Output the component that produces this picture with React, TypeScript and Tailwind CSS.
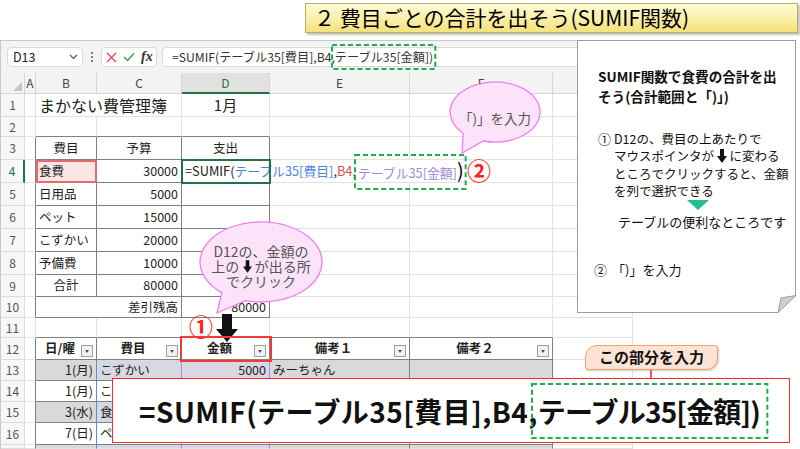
import React from 'react';

const font = "font-['Noto_Sans_CJK_JP','Noto_Sans',sans-serif]";

const R = {
  g: 'border-r-[#e2e2e2]',
  d: 'border-r-[#808080]',
  n: 'border-r-transparent',
  b: 'border-r-[#5b8bd9]',
  p: 'border-r-[#a48ed9]',
};
const B = {
  g: 'border-b-[#e2e2e2]',
  d: 'border-b-[#808080]',
};

const wA = 'w-[11px]';
const wB = 'w-[61px]';
const wC = 'w-[85px]';
const wD = 'w-[88px]';
const wE = 'w-[140px]';
const wF = 'w-[143px]';
const wG = 'w-[80px]';
const wBC = 'w-[146px]';

interface CellProps {
  w: string;
  r?: keyof typeof R;
  b?: keyof typeof B;
  className?: string;
  children?: React.ReactNode;
}

function Cell({ w, r = 'g', b = 'g', className = '', children }: CellProps) {
  return (
    <div
      className={`flex h-full shrink-0 items-center whitespace-nowrap border-r border-b px-[3px] ${w} ${R[r]} ${B[b]} ${className}`}
    >
      {children}
    </div>
  );
}

function Row({ h, n, active, children }: { h: string; n?: number; active?: boolean; children: React.ReactNode }) {
  return (
    <div className={`flex ${h}`}>
      <div
        className={`flex h-full w-[24px] shrink-0 items-center justify-center border-b border-r border-b-[#dcdcdc] bg-[#f7f7f7] text-[12px] ${
          active ? 'border-r-2 border-r-[#217346] text-[#217346]' : 'border-r-[#dcdcdc] text-[#555]'
        }`}
      >
        {n}
      </div>
      {children}
    </div>
  );
}

function FilterBtn() {
  return (
    <span className="mb-[2px] flex h-[12px] w-[12px] shrink-0 items-center justify-center self-end border border-[#9e9e9e] bg-[#f2f2f2]">
      <span className="h-0 w-0 border-x-[2.5px] border-t-[3px] border-x-transparent border-t-[#555]" />
    </span>
  );
}

function DashedBox({ className }: { className: string }) {
  return (
    <span className={`pointer-events-none absolute ${className}`}>
      <svg className="h-full w-full overflow-visible">
        <rect x="0" y="0" width="100%" height="100%" fill="none" stroke="#1fae4b" strokeWidth="2" strokeDasharray="5 3" />
      </svg>
    </span>
  );
}

function DownArrow({ className = '' }: { className?: string }) {
  return (
    <svg viewBox="0 0 10 14" className={`inline-block ${className}`}>
      <rect x="3" y="0" width="4" height="8" fill="#111" />
      <polygon points="0,7 10,7 5,14" fill="#111" />
    </svg>
  );
}

function FormulaBar() {
  return (
    <div className="flex h-[33px] items-start border-t border-[#c8c8c8] bg-[#f3f3f3] pl-[6px] pt-[6px]">
      <div className="flex h-[20px] w-[76px] items-center justify-between rounded-[4px] border border-[#dadada] bg-white pl-[5px] pr-[4px] text-[12.5px] text-[#222]">
        D13
        <svg width="9" height="6" viewBox="0 0 9 6">
          <path d="M1 1l3.5 3.5L8 1" fill="none" stroke="#555" strokeWidth="1.2" />
        </svg>
      </div>
      <div className="ml-[7px] flex h-[20px] w-[4px] flex-col items-center justify-center gap-[2px]">
        <span className="h-[2px] w-[2px] rounded-full bg-[#555]" />
        <span className="h-[2px] w-[2px] rounded-full bg-[#555]" />
        <span className="h-[2px] w-[2px] rounded-full bg-[#555]" />
      </div>
      <div className="ml-[7px] flex h-[20px] w-[56px] items-center gap-[6px] rounded-[4px] border border-[#dadada] bg-white pl-[4px]">
        <svg width="11" height="11" viewBox="0 0 11 11">
          <path d="M1 1l9 9M10 1l-9 9" stroke="#e5484d" strokeWidth="1.3" />
        </svg>
        <svg width="12" height="10" viewBox="0 0 12 10">
          <path d="M1 5l3.5 3.5L11 1.5" fill="none" stroke="#3c9a5f" strokeWidth="1.4" />
        </svg>
        <span className="font-['Liberation_Serif',serif] text-[14px] font-bold italic leading-none text-[#333]">fx</span>
      </div>
      <div className="ml-[5px] flex h-[20px] flex-1 items-center rounded-l-[4px] border border-[#dadada] bg-white pl-[9px] text-[12.2px] text-[#333]">
        =SUMIF(テーブル35[費目],B4,
        <span className="relative leading-[18px]">
          テーブル35[金額])
          <DashedBox className="-left-[3px] -right-[2px] -top-[3px] -bottom-[3px]" />
        </span>
      </div>
    </div>
  );
}

function ColHeaders() {
  const cols: [string, string][] = [
    ['A', wA],
    ['B', wB],
    ['C', wC],
    ['D', wD],
    ['E', wE],
    ['F', wF],
    ['G', wG],
  ];
  return (
    <div className="flex h-[21px] bg-[#f3f3f3] text-[12px] text-[#444]">
      <div className="relative w-[24px] shrink-0 border-b border-r border-[#d6d6d6]">
        <svg className="absolute bottom-[2px] right-[2px]" width="9" height="9" viewBox="0 0 9 9">
          <polygon points="9,0 9,9 0,9" fill="#c4c4c4" />
        </svg>
      </div>
      {cols.map(([c, w]) => (
        <div
          key={c}
          className={`flex shrink-0 items-center justify-center border-r border-[#d6d6d6] ${w} ${
            c === 'D' ? 'border-b-2 border-b-[#217346] bg-[#e1e1e1] text-[#217346]' : 'border-b'
          }`}
        >
          {c}
        </div>
      ))}
    </div>
  );
}

const budget = [
  { n: 5, h: 'h-[23px]', k: '日用品', v: '5000' },
  { n: 6, h: 'h-[23px]', k: 'ペット', v: '15000' },
  { n: 7, h: 'h-[23px]', k: 'こずかい', v: '20000' },
  { n: 8, h: 'h-[23px]', k: '予備費', v: '10000' },
  { n: 9, h: 'h-[22px]', k: '合計', v: '80000' },
];

const records = [
  { n: 13, h: 'h-[21px]', band: true, d: ['1(月)', 'こずかい', '5000', 'みーちゃん'] },
  { n: 14, h: 'h-[21px]', band: false, d: ['1(月)', 'こずかい', '3000', ''] },
  { n: 15, h: 'h-[21px]', band: true, d: ['3(水)', '食費', '8000', ''] },
  { n: 16, h: 'h-[22px]', band: false, d: ['7(日)', 'ペット', '2000', ''] },
];

function Sheet() {
  return (
    <div className="text-[12.5px] text-[#222]">
      <Row h="h-[23px]" n={1}>
        <Cell w={wA} />
        <Cell w={wBC} className="text-[16px]">
          まかない費管理簿
        </Cell>
        <Cell w={wD} className="justify-center text-[15px]">
          1月
        </Cell>
        <Cell w={wE} />
        <Cell w={wF} />
        <Cell w={wG} />
      </Row>
      <Row h="h-[20px]" n={2}>
        <Cell w={wA} />
        <Cell w={wB} b="d" />
        <Cell w={wC} b="d" />
        <Cell w={wD} b="d" />
        <Cell w={wE} />
        <Cell w={wF} />
        <Cell w={wG} />
      </Row>
      <Row h="h-[23px]" n={3}>
        <Cell w={wA} r="d" />
        <Cell w={wB} r="d" b="d" className="justify-center">
          費目
        </Cell>
        <Cell w={wC} r="d" b="d" className="justify-center">
          予算
        </Cell>
        <Cell w={wD} r="d" b="d" className="justify-center">
          支出
        </Cell>
        <Cell w={wE} />
        <Cell w={wF} />
        <Cell w={wG} />
      </Row>
      <Row h="h-[23px]" n={4} active>
        <Cell w={wA} r="d" />
        <Cell w={wB} r="d" b="d" className="relative z-10 bg-[#fbe6e6] outline-2 -outline-offset-2 outline-[#e26d6d]">
          食費
        </Cell>
        <Cell w={wC} r="d" b="d" className="justify-end">
          30000
        </Cell>
        <Cell w={wD} r="d" b="d" className="relative z-10 overflow-visible outline-2 -outline-offset-1 outline-[#217346] text-[12.8px]">
          <span>=SUMIF(</span>
          <span className="text-[#4f83d9]">テーブル35[費目]</span>
          <span>,</span>
          <span className="text-[#e05050]">B4</span>
          <span>,</span>
          <span className="relative ml-[2px] leading-[18px] text-[#a187d9]">
            テーブル35[金額]
            <span className="text-[20px] leading-none text-black">)</span>
            <DashedBox className="-left-[3px] -right-[2px] -top-[5px] -bottom-[7px]" />
          </span>
        </Cell>
        <Cell w={wE} r="n" />
        <Cell w={wF} />
        <Cell w={wG} />
      </Row>
      {budget.map((row) => (
        <Row key={row.n} h={row.h} n={row.n}>
          <Cell w={wA} r="d" />
          <Cell w={wB} r="d" b="d" className={row.k === '合計' ? 'justify-center' : ''}>
            {row.k}
          </Cell>
          <Cell w={wC} r="d" b="d" className="justify-end">
            {row.v}
          </Cell>
          <Cell w={wD} r="d" b="d" />
          <Cell w={wE} />
          <Cell w={wF} />
          <Cell w={wG} />
        </Row>
      ))}
      <Row h="h-[21px]" n={10}>
        <Cell w={wA} r="d" />
        <Cell w={wBC} r="d" b="d" className="justify-end">
          差引残高
        </Cell>
        <Cell w={wD} r="d" b="d" className="justify-end">
          80000
        </Cell>
        <Cell w={wE} />
        <Cell w={wF} />
        <Cell w={wG} />
      </Row>
      <Row h="h-[20px]" n={11}>
        <Cell w={wA} />
        <Cell w={wB} b="d" />
        <Cell w={wC} b="d" />
        <Cell w={wD} b="d" />
        <Cell w={wE} b="d" />
        <Cell w={wF} b="d" />
        <Cell w={wG} />
      </Row>
      <Row h="h-[22px]" n={12}>
        <Cell w={wA} r="d" />
        <Cell w={wB} r="d" b="d" className="font-bold">
          <span className="flex-1 text-center">日/曜</span>
          <FilterBtn />
        </Cell>
        <Cell w={wC} r="d" b="d" className="font-bold">
          <span className="flex-1 text-center">費目</span>
          <FilterBtn />
        </Cell>
        <Cell w={wD} r="d" b="d" className="relative z-10 font-bold outline-2 outline-[#f03a3a]">
          <span className="flex-1 text-center">金額</span>
          <FilterBtn />
        </Cell>
        <Cell w={wE} r="d" b="d" className="font-bold">
          <span className="flex-1 text-center">備考１</span>
          <FilterBtn />
        </Cell>
        <Cell w={wF} r="d" b="d" className="font-bold">
          <span className="flex-1 text-center">備考２</span>
          <FilterBtn />
        </Cell>
        <Cell w={wG} />
      </Row>
      {records.map((row) => (
        <Row key={row.n} h={row.h} n={row.n}>
          <Cell w={wA} r="d" />
          <Cell w={wB} r="b" b="d" className={`justify-end ${row.band ? 'bg-[#d9d9d9]' : 'bg-white'}`}>
            {row.d[0]}
          </Cell>
          <Cell w={wC} r="p" b="d" className={row.band ? 'bg-[#d6d9e2]' : 'bg-white'}>
            {row.d[1]}
          </Cell>
          <Cell w={wD} r="p" b="d" className={`justify-end ${row.band ? 'bg-[#dad6e3]' : 'bg-white'}`}>
            {row.d[2]}
          </Cell>
          <Cell w={wE} r="d" b="d" className={row.band ? 'bg-[#d9d9d9]' : 'bg-white'}>
            {row.d[3]}
          </Cell>
          <Cell w={wF} r="d" b="d" className={row.band ? 'bg-[#d9d9d9]' : 'bg-white'} />
          <Cell w={wG} />
        </Row>
      ))}
      <Row h="h-[4px]">
        <Cell w={wA} r="d" />
        <Cell w={wB} r="b" className="bg-[#d9d9d9]" />
        <Cell w={wC} r="p" className="bg-[#d6d9e2]" />
        <Cell w={wD} r="p" className="bg-[#dad6e3]" />
        <Cell w={wE} r="d" className="bg-[#d9d9d9]" />
        <Cell w={wF} r="d" className="bg-[#d9d9d9]" />
        <Cell w={wG} />
      </Row>
    </div>
  );
}

function NotePanel() {
  return (
    <div className="absolute left-[577px] top-[40px] h-[273px] w-[219px] border border-[#9c9c9c] bg-white pl-[20px] pt-[25px] text-[12.5px] text-[#111]">
      <div className="whitespace-nowrap text-[13.6px] font-bold leading-[20px]">
        SUMIF関数で食費の合計を出
        <br />
        そう(合計範囲と「)」)
      </div>
      <div className="mt-[24px] flex whitespace-nowrap leading-[17.3px]">
        <span className="w-[16px] shrink-0 text-[13px]">①</span>
        <div>
          D12の、費目の上あたりで
          <br />
          マウスポインタが <DownArrow className="h-[14px] w-[10px] align-[-2px]" /> に変わる
          <br />
          ところでクリックすると、金額
          <br />
          を列で選択できる
        </div>
      </div>
      <div className="ml-[89px] mt-[1px] h-0 w-0 border-x-[11px] border-t-[10px] border-x-transparent border-t-[#1fbf8f]" />
      <div className="ml-[20px] mt-[3px] whitespace-nowrap text-[13px] leading-[18px]">テーブルの便利なところです</div>
      <div className="ml-[-4px] mt-[30px] flex whitespace-nowrap leading-[18px]">
        <span className="w-[18px] shrink-0 text-[13px]">②</span>
        <span className="text-[13px]">「)」を入力</span>
      </div>
      <svg className="absolute -bottom-[1px] -right-[1px]" width="18" height="18" viewBox="0 0 18 18">
        <polygon points="18,0 18,18 0,18" fill="#ffffff" />
        <polygon points="0,17.5 18,0.5 3,3" fill="#cfcfcf" stroke="#9c9c9c" strokeWidth="1" />
      </svg>
    </div>
  );
}

function Callouts() {
  return (
    <>
      <svg className="absolute left-[190px] top-[215px]" width="140" height="105" viewBox="0 0 140 105">
        <path d="M55.2 85.6A61 40 0 1 0 31.8 77.6L27 98Z" fill="#fce3fa" stroke="#ef7fef" strokeWidth="1.3" />
      </svg>
      <div className="absolute left-[200px] top-[244px] w-[122px] text-center text-[14px] leading-[15px] text-[#555]">
        D12の、金額の
        <br />
        上の <DownArrow className="h-[13px] w-[9px] align-[-1px]" /> が出る所
        <br />
        でクリック
      </div>
      <svg className="absolute left-[444px] top-[78px]" width="100" height="80" viewBox="0 0 100 80">
        <path d="M39.4 63A45 30 0 1 0 19.2 55.2L18 75Z" fill="#fce3fa" stroke="#ef7fef" strokeWidth="1.3" />
      </svg>
      <div className="absolute left-[450px] top-[108px] w-[90px] text-center text-[13.5px] leading-[20px] text-[#555]">
        「)」を入力
      </div>
      <div className="absolute left-[467px] top-[158px] text-[24px] font-bold leading-none text-[#ff2020]">②</div>
      <div className="absolute left-[189px] top-[314px] text-[24px] font-bold leading-none text-[#ff2020]">①</div>
      <svg className="absolute left-[215px] top-[314px]" width="24" height="30" viewBox="0 0 24 30">
        <rect x="7" y="0" width="10" height="16" fill="#111" />
        <polygon points="1,15 23,15 12,28" fill="#111" />
      </svg>
    </>
  );
}

export default function App() {
  return (
    <div className={`relative h-[449px] w-[800px] overflow-hidden bg-white ${font}`}>
      <div className="h-[40px] pl-[305px] pt-[3px]">
        <div className="flex h-[30px] w-[493px] items-center whitespace-nowrap border border-[#bcae62] bg-linear-to-b from-[#fffbd6] to-[#f4e27a] pl-[8px] text-[21px] text-black shadow-[2px_2px_2px_rgba(0,0,0,0.25)]">
          ２ 費目ごとの合計を出そう(SUMIF関数)
        </div>
      </div>
      <div className="w-[633px] border-l border-[#c8c8c8]">
        <FormulaBar />
        <ColHeaders />
        <Sheet />
      </div>

      <Callouts />
      <NotePanel />

      <div className="absolute left-[585px] top-[345px] flex h-[25px] w-[133px] items-center justify-center rounded-bl-[3px] rounded-br-[12px] rounded-tl-[12px] rounded-tr-[3px] border-[1.5px] border-[#f4a462] bg-[#fbe4d5] text-[15px] font-bold text-[#111] shadow-[1px_1px_2px_rgba(0,0,0,0.2)]">
        この部分を入力
      </div>
      <svg className="absolute left-[646px] top-[370px]" width="10" height="20" viewBox="0 0 10 20">
        <line x1="5" y1="0" x2="5" y2="14" stroke="#ff2020" strokeWidth="1.5" />
        <polygon points="2,13 8,13 5,19" fill="#ff2020" />
      </svg>

      <div className="absolute left-[112px] top-[378px] flex h-[65px] w-[678px] items-center whitespace-nowrap border-[1.5px] border-[#ff2a2a] bg-white pl-[26px] text-[28px] font-bold leading-none text-[#111]">
        <span className="tracking-[0.45px]">=SUMIF(テーブル35[費目],B4,</span>
        <span className="relative tracking-[-0.8px]">
          テーブル35[金額])
          <DashedBox className="-left-[6px] -right-[7px] -top-[13px] -bottom-[13px]" />
        </span>
      </div>
    </div>
  );
}
